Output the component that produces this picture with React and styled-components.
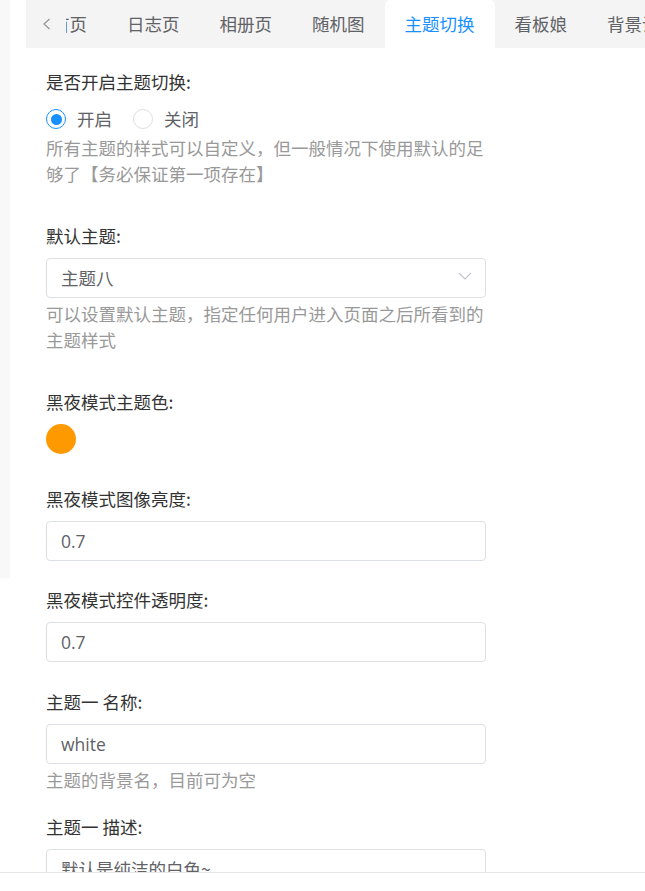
import React from "react";
import styled, { createGlobalStyle } from "styled-components";

const GlobalStyle = createGlobalStyle`
  html, body {
    margin: 0;
    padding: 0;
    background: #ffffff;
    overflow: hidden;
  }
  body {
    font-family: "Noto Sans CJK SC", "Noto Sans", sans-serif;
  }
  * { box-sizing: border-box; }
`;

const Page = styled.div`
  display: flex;
  align-items: flex-start;
  width: 645px;
  height: 891px;
  overflow: hidden;
`;

const Sidebar = styled.aside`
  flex: 0 0 10px;
  height: 578px;
  background: #f8f8f8;
`;

const Main = styled.main`
  flex: 1;
  min-width: 0;
  margin-left: 16px;
`;

const TabBar = styled.div`
  display: flex;
  height: 48px;
  background: #f4f4f4;
`;

const TabArrow = styled.span`
  flex: 0 0 40px;
  display: flex;
  align-items: center;
  justify-content: center;
  color: #909399;
`;

const TabViewport = styled.div`
  flex: 1;
  min-width: 0;
  overflow: hidden;
`;

const TabList = styled.div`
  display: flex;
  white-space: nowrap;
  transform: translateX(${(p) => p.$offset}px);
`;

const Tab = styled.div`
  flex: 0 0 auto;
  height: 48px;
  line-height: 48px;
  padding: 0 20px;
  font-size: 17.5px;
  color: ${(p) => (p.$active ? "#1890ff" : "#606266")};
  background: ${(p) => (p.$active ? "#ffffff" : "transparent")};
  border-radius: ${(p) => (p.$active ? "5px 5px 0 0" : "0")};
`;

const Form = styled.div`
  padding: 21px 0 0 20px;
  width: 460px;
`;

const FormItem = styled.div`
  margin-bottom: ${(p) => p.$mb}px;
`;

const Label = styled.div`
  font-size: 17.5px;
  line-height: 26px;
  color: #333333;
`;

const Help = styled.div`
  margin-top: 3px;
  font-size: 17.5px;
  line-height: 26px;
  color: #999999;
`;

const RadioGroup = styled.div`
  display: flex;
  align-items: center;
  gap: 21px;
  margin-top: 11px;
  height: 26px;
`;

const RadioOption = styled.label`
  display: flex;
  align-items: center;
  gap: 11px;
  font-size: 17.5px;
  line-height: 26px;
  color: #606266;
`;

const RadioCircle = styled.span`
  width: 20px;
  height: 20px;
  border-radius: 50%;
  border: 1px solid ${(p) => (p.$checked ? "#1890ff" : "#dcdfe6")};
  display: flex;
  align-items: center;
  justify-content: center;
  &::after {
    content: "";
    width: 11px;
    height: 11px;
    border-radius: 50%;
    background: ${(p) => (p.$checked ? "#1890ff" : "transparent")};
  }
`;

const Control = styled.div`
  margin-top: 9px;
  width: 440px;
  height: 40px;
  border: 1px solid #dcdfe6;
  border-radius: 4px;
  padding: 0 14px;
  display: flex;
  align-items: center;
  justify-content: space-between;
  font-size: 17.5px;
  color: #606266;
  background: #ffffff;
`;

const ControlText = styled.span`
  font-family: ${(p) => (p.$latin ? '"Open Sans", "Noto Sans CJK SC", sans-serif' : '"Noto Sans CJK SC", sans-serif')};
  line-height: 38px;
`;

const Chevron = styled.span`
  display: flex;
  align-items: center;
  margin-right: -1px;
  margin-top: -4px;
  color: #c0c4cc;
`;

const ColorDot = styled.div`
  margin-top: 9px;
  width: 30px;
  height: 30px;
  border-radius: 50%;
  background: ${(p) => p.$color};
`;

const Footer = styled.footer`
  position: fixed;
  left: 0;
  right: 0;
  bottom: 0;
  height: 19px;
  background: #ffffff;
  border-top: 1px solid #e6e6e6;
`;

const tabs = ["首页", "日志页", "相册页", "随机图", "主题切换", "看板娘", "背景设置"];

export default function App() {
  return (
    <>
      <GlobalStyle />
      <Page>
        <Sidebar />
        <Main>
          <TabBar>
            <TabArrow>
              <svg width="9" height="12" viewBox="0 0 9 12" fill="none">
                <path d="M7.5 1L2 6l5.5 5" stroke="currentColor" strokeWidth="1.2" />
              </svg>
            </TabArrow>
            <TabViewport>
              <TabList $offset={-34}>
                {tabs.map((t) => (
                  <Tab key={t} $active={t === "主题切换"}>
                    {t}
                  </Tab>
                ))}
              </TabList>
            </TabViewport>
          </TabBar>

          <Form>
            <FormItem $mb={36}>
              <Label>是否开启主题切换:</Label>
              <RadioGroup>
                <RadioOption>
                  <RadioCircle $checked />
                  开启
                </RadioOption>
                <RadioOption>
                  <RadioCircle />
                  关闭
                </RadioOption>
              </RadioGroup>
              <Help>所有主题的样式可以自定义，但一般情况下使用默认的足够了【务必保证第一项存在】</Help>
            </FormItem>

            <FormItem $mb={36}>
              <Label>默认主题:</Label>
              <Control>
                <ControlText>主题八</ControlText>
                <Chevron>
                  <svg width="14" height="8" viewBox="0 0 14 8" fill="none">
                    <path d="M1 1l6 6 6-6" stroke="currentColor" strokeWidth="1.1" />
                  </svg>
                </Chevron>
              </Control>
              <Help>可以设置默认主题，指定任何用户进入页面之后所看到的主题样式</Help>
            </FormItem>

            <FormItem $mb={32}>
              <Label>黑夜模式主题色:</Label>
              <ColorDot $color="#ff9900" />
            </FormItem>

            <FormItem $mb={26}>
              <Label>黑夜模式图像亮度:</Label>
              <Control>
                <ControlText $latin>0.7</ControlText>
              </Control>
            </FormItem>

            <FormItem $mb={27}>
              <Label>黑夜模式控件透明度:</Label>
              <Control>
                <ControlText $latin>0.7</ControlText>
              </Control>
            </FormItem>

            <FormItem $mb={21}>
              <Label>主题一 名称:</Label>
              <Control>
                <ControlText $latin>white</ControlText>
              </Control>
              <Help>主题的背景名，目前可为空</Help>
            </FormItem>

            <FormItem $mb={22}>
              <Label>主题一 描述:</Label>
              <Control>
                <ControlText>默认是纯洁的白色~</ControlText>
              </Control>
            </FormItem>
          </Form>
        </Main>
        <Footer />
      </Page>
    </>
  );
}
